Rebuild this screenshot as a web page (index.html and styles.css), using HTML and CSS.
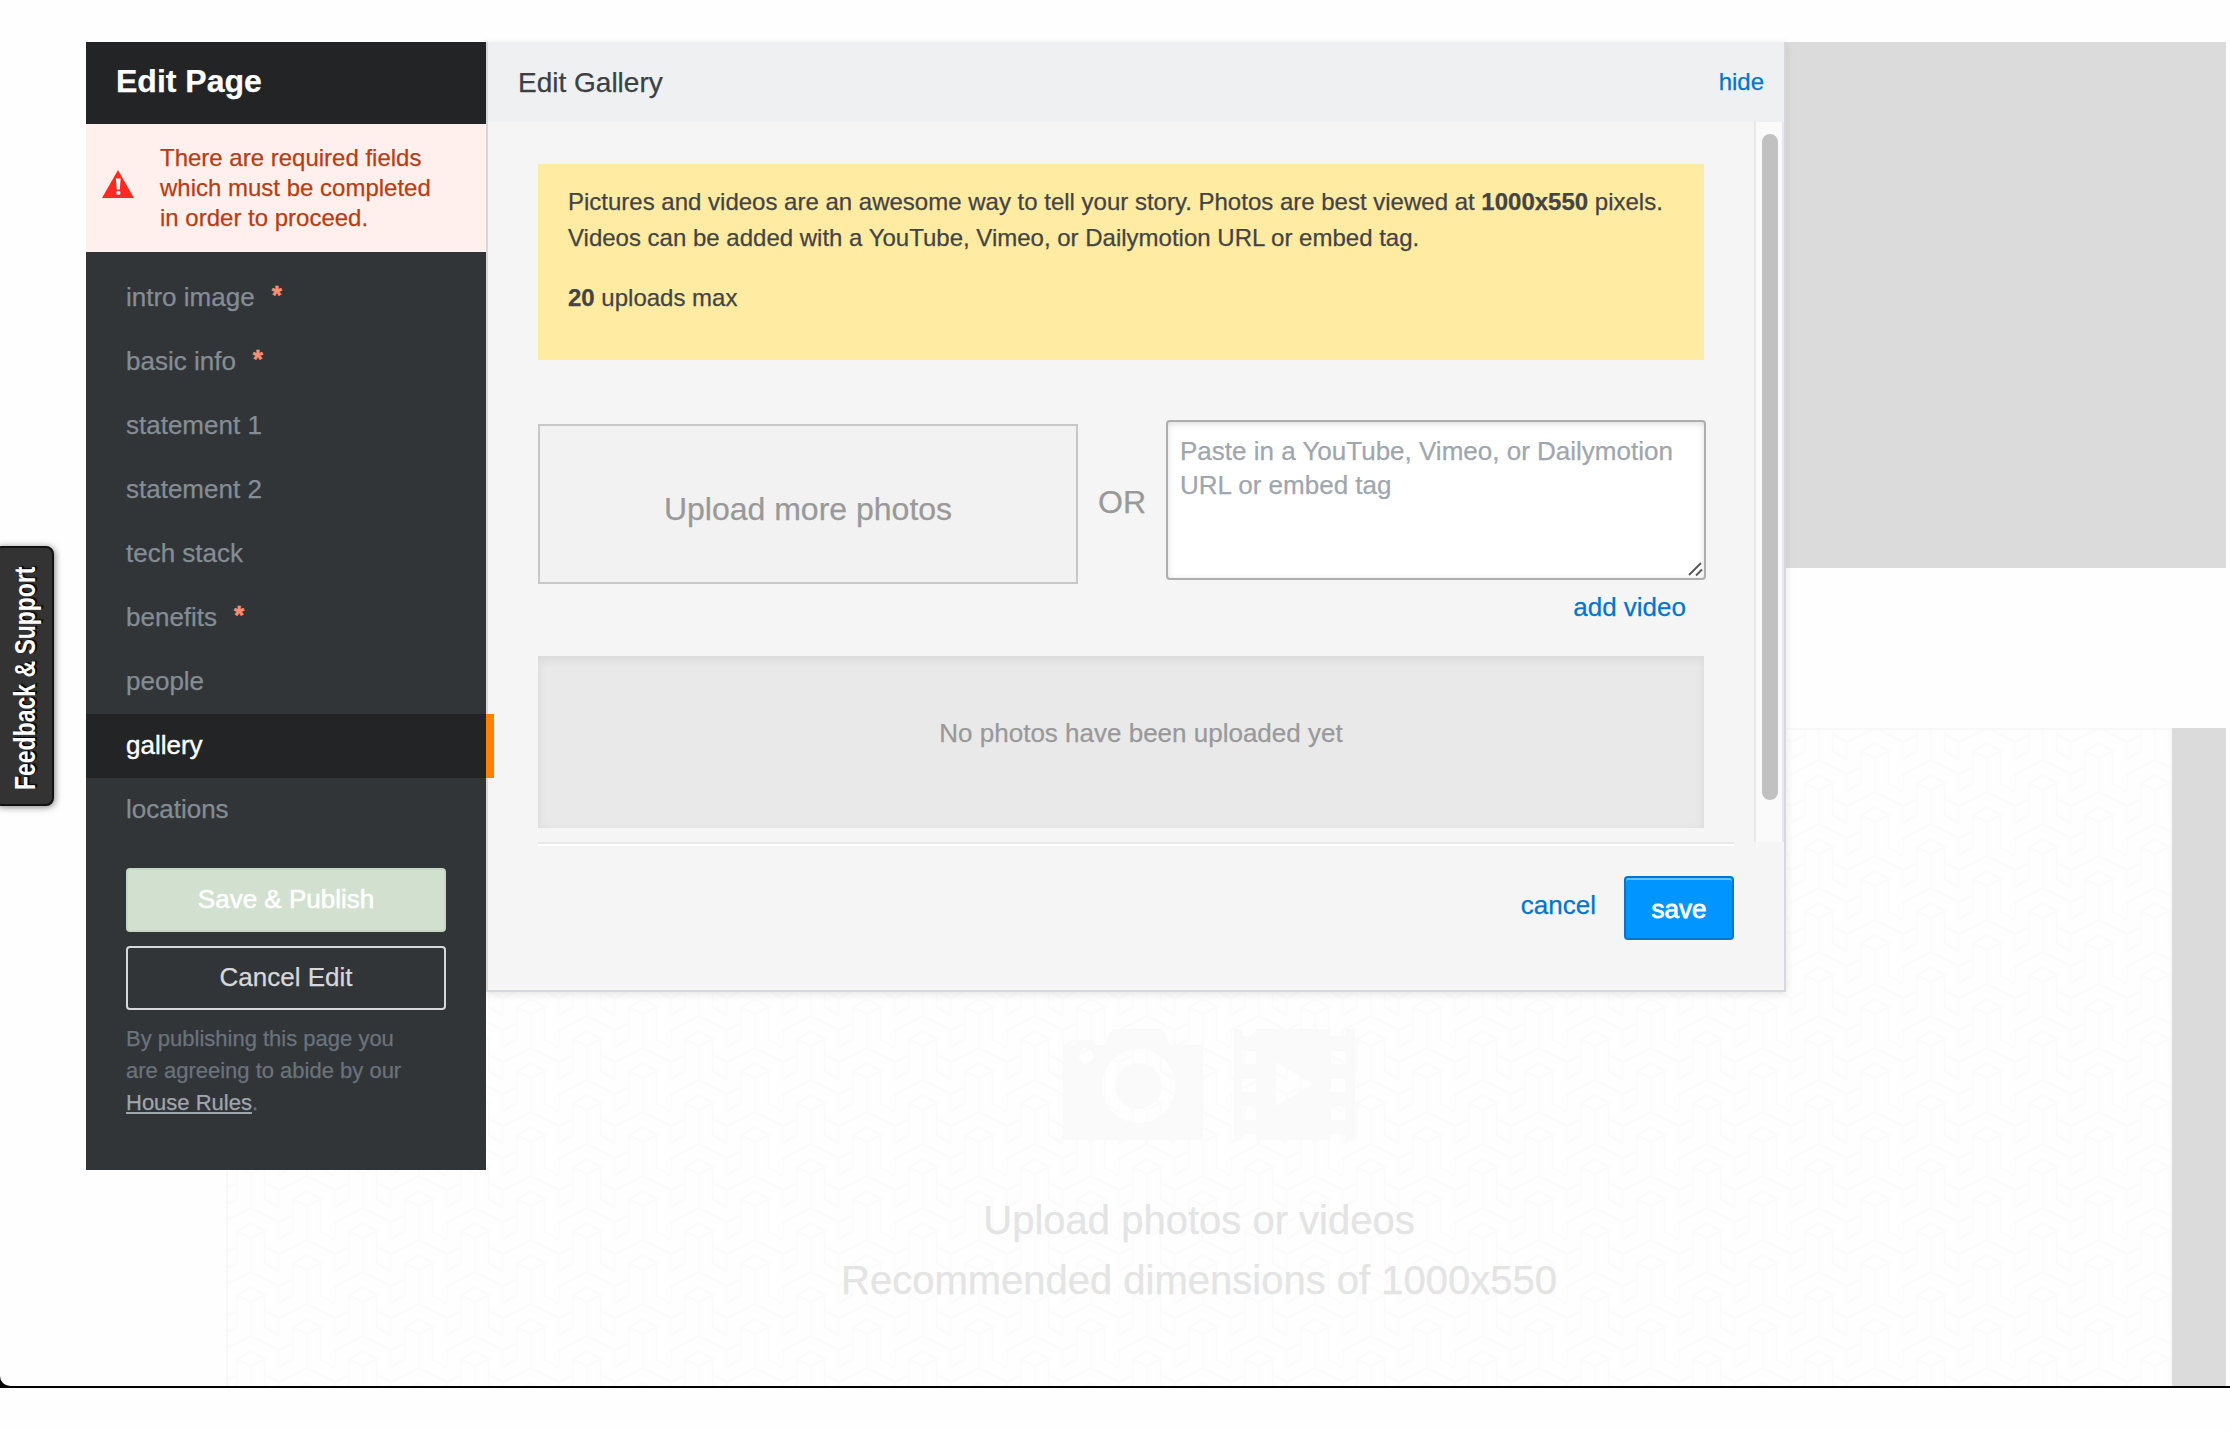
FILE: index.html
```html
<!DOCTYPE html>
<html lang="en">
<head>
<meta charset="utf-8">
<title>Edit Page</title>
<link rel="stylesheet" href="styles.css">
</head>
<body>
<div class="window">
  <main class="page">
    <div class="hero"></div>
    <section class="media">
      <div class="dropzone">
        <svg class="dropzone-pattern" aria-hidden="true">
          <defs>
            <pattern id="weave" width="112" height="64" patternUnits="userSpaceOnUse" patternTransform="translate(-5.3 30)">
              <g id="cell" fill="none" stroke="#fbfbfb" stroke-width="2">
                <path id="motif" d="M0 14 28 0 56 14V30M0 14V30M14 56V23L28 15.500 42 23V56M28 30V64M14 23 28 30 42 23M14 56 0 64M42 56 56 64M0 14-14 7M56 14 70 7M0 30-14 23M56 30 70 23"/>
                <use href="#motif" x="56" y="32"/>
                <use href="#motif" x="56" y="-32"/>
                <use href="#motif" x="-56" y="32"/>
                <use href="#motif" x="-56" y="-32"/>
              </g>
            </pattern>
          </defs>
          <rect width="100%" height="100%" fill="url(#weave)"/>
        </svg>
        <div class="dropzone-content">
          <div class="dropzone-icons">
            <svg width="140" height="112" viewBox="0 0 140 112">
              <path fill="#fafafa" fill-rule="evenodd" d="M0 17H11L14 12H31L34 17H40C45 17 45 1 52 1H97C104 1 103 17 109 17H140V112H0ZM23 20A7 8 0 1 0 23 36A7 8 0 1 0 23 20ZM75.500 21A37 37 0 1 0 75.500 95A37 37 0 1 0 75.500 21ZM75.500 35A23 23 0 1 1 75.500 81A23 23 0 1 1 75.500 35Z"/>
            </svg>
            <svg width="121" height="112" viewBox="0 0 121 112">
              <path fill="#fafafa" fill-rule="evenodd" d="M0 1H8V8H22V1H97V8H111V1H121V112H111V106H97V112H22V106H8V112H0ZM8 23V36H22V23ZM97 23V36H111V23ZM8 51V64H22V51ZM97 51V64H111V51ZM8 78V92H22V78ZM97 78V92H111V78ZM42 34V78L79 56Z"/>
            </svg>
          </div>
          <p>Upload photos or videos</p>
          <p>Recommended dimensions of 1000x550</p>
        </div>
      </div>
      <div class="media-next"></div>
    </section>
  </main>

  <div class="editor">
    <aside class="sidebar">
      <h1 class="sidebar-title">Edit Page</h1>
      <div class="alert">
        <svg class="alert-icon" width="32" height="28" viewBox="0 0 32 28">
          <path fill="#ff2a23" d="M16 0 32 28H0Z"/>
          <path fill="#fff" d="M13.900 8.500H18.600L17.800 19.500H14.800Z"/>
          <circle cx="16.400" cy="22.800" r="2.100" fill="#fff"/>
        </svg>
        <p>There are required fields<br>which must be completed<br>in order to proceed.</p>
      </div>
      <nav class="steps">
        <a class="step">intro image<b>*</b></a>
        <a class="step">basic info<b>*</b></a>
        <a class="step">statement 1</a>
        <a class="step">statement 2</a>
        <a class="step">tech stack</a>
        <a class="step">benefits<b>*</b></a>
        <a class="step">people</a>
        <a class="step step-active">gallery</a>
        <a class="step">locations</a>
      </nav>
      <div class="publish">
        <button class="button button-publish">Save &amp; Publish</button>
        <button class="button button-cancel">Cancel Edit</button>
        <p class="legal">By publishing this page you<br>are agreeing to abide by our<br><a>House Rules</a>.</p>
      </div>
    </aside>

    <section class="panel">
      <header class="panel-header">
        <h2>Edit Gallery</h2>
        <a class="link hide">hide</a>
      </header>
      <div class="panel-scroll">
        <div class="panel-body">
          <div class="notice">
            <p>Pictures and videos are an awesome way to tell your story. Photos are best viewed at <b>1000x550</b> pixels.<br>Videos can be added with a YouTube, Vimeo, or Dailymotion URL or embed tag.</p>
            <p><b>20</b> uploads max</p>
          </div>
          <div class="sources">
            <div class="upload">Upload more photos</div>
            <span class="or">OR</span>
            <div class="video">
              <div class="video-field">
                <textarea class="video-input" placeholder="Paste in a YouTube, Vimeo, or Dailymotion URL or embed tag"></textarea>
                <svg class="grip" width="16" height="16" viewBox="0 0 16 16"><path d="M2 14 14 2M9 14.500 15 8.500" stroke="#555" stroke-width="1.800" fill="none"/></svg>
              </div>
              <a class="link">add video</a>
            </div>
          </div>
          <div class="photos">No photos have been uploaded yet</div>
        </div>
        <div class="scrollbar"><div class="thumb"></div></div>
      </div>
      <footer class="panel-footer">
        <a class="link">cancel</a>
        <button class="save">save</button>
      </footer>
    </section>
  </div>

  <div class="feedback">
    <svg width="54" height="256" viewBox="0 0 54 256">
      <text class="feedback-text" transform="translate(35 242) rotate(-90) scale(0.793 1)">Feedback &amp; Support</text>
    </svg>
  </div>
</div>
</body>
</html>
```
FILE: styles.css
```css
* { box-sizing: border-box; }

body {
  margin: 0;
  background: #fefefe;
  font-family: "Liberation Sans", Arial, sans-serif;
  font-size: 26px;
  color: #3b4045;
  -webkit-text-stroke: 0.25px;
}

p, h1, h2 { margin: 0; font-weight: normal; }

button { font-family: inherit; }

.window {
  position: relative;
  height: 1388px;
  background: linear-gradient(#000, #000) left bottom / 100% 16px no-repeat;
}

.page {
  height: 1386px;
  padding-top: 42px;
  background: #fefefe;
  border-bottom-left-radius: 10px;
  overflow: hidden;
}

.hero {
  width: 2000px;
  height: 526px;
  margin-left: 226px;
  background: #dbdbdb;
}

.media {
  display: flex;
  width: 2000px;
  height: 658px;
  margin: 160px 0 0 226px;
}

.dropzone {
  position: relative;
  width: 1946px;
  border: solid #f8f8f8;
  border-width: 2px 2px 0;
}

.dropzone-pattern {
  position: absolute;
  inset: 0;
  width: 100%;
  height: 100%;
}

.dropzone-content {
  position: relative;
  padding-top: 298px;
  font-size: 40px;
  line-height: 60px;
  text-align: center;
  color: #e4e4e4;
}

.dropzone-icons {
  display: flex;
  gap: 31px;
  height: 162px;
  margin-left: 835px;
}

.media-next { flex: 1; background: #dbdbdb; }

.editor {
  position: absolute;
  top: 42px;
  left: 86px;
  display: flex;
  align-items: flex-start;
}

.sidebar {
  position: relative;
  z-index: 1;
  width: 400px;
  height: 1128px;
  background: #323538;
}

.sidebar-title {
  height: 82px;
  padding: 0 30px;
  background: #232426;
  font-size: 32px;
  font-weight: bold;
  line-height: 79px;
  color: #fff;
}

.alert {
  display: flex;
  height: 128px;
  padding: 19px 0 0 16px;
  gap: 26px;
  background: #fff0ed;
  font-size: 24px;
  line-height: 30px;
  color: #b93d13;
}

.alert-icon { margin-top: 27px; }

.steps { display: block; padding-top: 14px; }

.step {
  display: block;
  height: 64px;
  padding-left: 40px;
  line-height: 63px;
  color: #848d95;
}

.step b {
  margin-left: 17px;
  color: #ff8e72;
  line-height: 1;
  vertical-align: 2px;
  -webkit-text-stroke: 0.5px;
}

.step-active {
  width: 408px;
  border-right: 8px solid #ff8000;
  background: #232426;
  color: #fff;
  -webkit-text-stroke: 0.4px;
}

.publish {
  display: flex;
  flex-direction: column;
  gap: 14px;
  padding: 26px 40px 0;
}

.button {
  height: 64px;
  padding: 0 0 2px;
  border: 2px solid;
  border-radius: 4px;
  font-size: 26px;
}

.button-publish {
  border-color: #c5d6c3;
  background: #d1e0cf;
  color: #fff;
  -webkit-text-stroke: 0.6px;
}

.button-cancel {
  border-color: #d6d8db;
  background: transparent;
  color: #d6d8db;
  -webkit-text-stroke: 0.25px;
}

.legal {
  margin-top: -1px;
  font-size: 22px;
  line-height: 32px;
  color: #6a737c;
}

.legal a {
  color: #9fa6ad;
  text-decoration: underline;
  text-decoration-thickness: 2px;
  text-underline-offset: 2px;
  text-decoration-skip-ink: none;
}

.panel {
  width: 1300px;
  height: 950px;
  border: solid #d6d8db;
  border-width: 0 2px 2px;
  background: #f5f5f5;
  box-shadow: 0 2px 8px rgba(12, 13, 14, 0.1);
}

.panel-header {
  display: flex;
  justify-content: space-between;
  height: 80px;
  padding: 0 20px 0 30px;
  background: #eff0f1;
}

.panel-header h2 { font-size: 28px; line-height: 82px; }

.link { color: #0077cc; }

.hide { font-size: 24px; line-height: 80px; }

.panel-scroll { display: flex; height: 720px; }

.panel-body { flex: 1; padding: 42px 50px 0; }

.notice {
  display: flex;
  flex-direction: column;
  gap: 24px;
  height: 196px;
  padding: 20px 30px;
  background: #ffeba2;
  font-size: 24px;
  line-height: 36px;
  white-space: nowrap;
  color: #444;
}

.sources {
  display: flex;
  height: 236px;
  margin: 60px -2px 0 0;
}

.upload {
  width: 540px;
  height: 160px;
  margin-top: 4px;
  border: 2px solid #c8c8c8;
  background: #f2f2f2;
  font-size: 32px;
  line-height: 166px;
  text-align: center;
  color: #999;
}

.or {
  flex: 1;
  font-size: 32px;
  line-height: 164px;
  text-align: center;
  color: #999;
}

.video {
  display: flex;
  flex-direction: column;
  width: 540px;
  padding-right: 20px;
  text-align: right;
}

.video-field {
  position: relative;
  width: 540px;
  height: 160px;
  margin-bottom: 12px;
}

.video-input {
  display: block;
  width: 540px;
  height: 160px;
  padding: 12px;
  border: 2px solid #adadad;
  border-radius: 4px;
  background: #fff;
  box-shadow: inset 0 2px 6px rgba(0, 0, 0, 0.14);
  font: 26px/34px "Liberation Sans", Arial, sans-serif;
  resize: none;
}

.video-input::placeholder { color: #9fa6ad; opacity: 1; }

.grip { position: absolute; right: 3px; bottom: 3px; }

.photos {
  height: 172px;
  padding-left: 40px;
  background: #e9e9e9;
  box-shadow: inset 0 3px 10px rgba(0, 0, 0, 0.08);
  line-height: 154px;
  text-align: center;
  color: #999;
}

.scrollbar {
  width: 30px;
  padding: 12px 4px 0 6px;
  border: solid #e8e8e8;
  border-width: 0 2px;
  background: #fafafa;
}

.thumb {
  width: 16px;
  height: 666px;
  border-radius: 8px;
  background: #c1c1c1;
}

.panel-footer {
  display: flex;
  justify-content: flex-end;
  gap: 28px;
  margin: 0 50px;
  padding-top: 32px;
  border-top: 2px solid #e8e8e8;
  box-shadow: inset 0 2px #fff;
  line-height: 58px;
}

.save {
  width: 110px;
  height: 64px;
  padding: 2px 0 0;
  border: 2px solid #0077cc;
  border-radius: 4px;
  background: #0095ff;
  box-shadow: inset 0 2px #66bfff;
  font-size: 26px;
  color: #fff;
  -webkit-text-stroke: 0.8px;
}

.feedback {
  position: absolute;
  top: 546px;
  left: -6px;
  width: 60px;
  height: 260px;
  padding-left: 4px;
  border: 2px solid #111;
  border-radius: 8px;
  background: #333;
  box-shadow: 1px 1px 7px rgba(0, 0, 0, 0.5);
}

.feedback-text {
  font-size: 29px;
  font-weight: bold;
  fill: #fff;
  text-shadow: 1px 2px 1px #000;
  -webkit-text-stroke: 0;
}
```
